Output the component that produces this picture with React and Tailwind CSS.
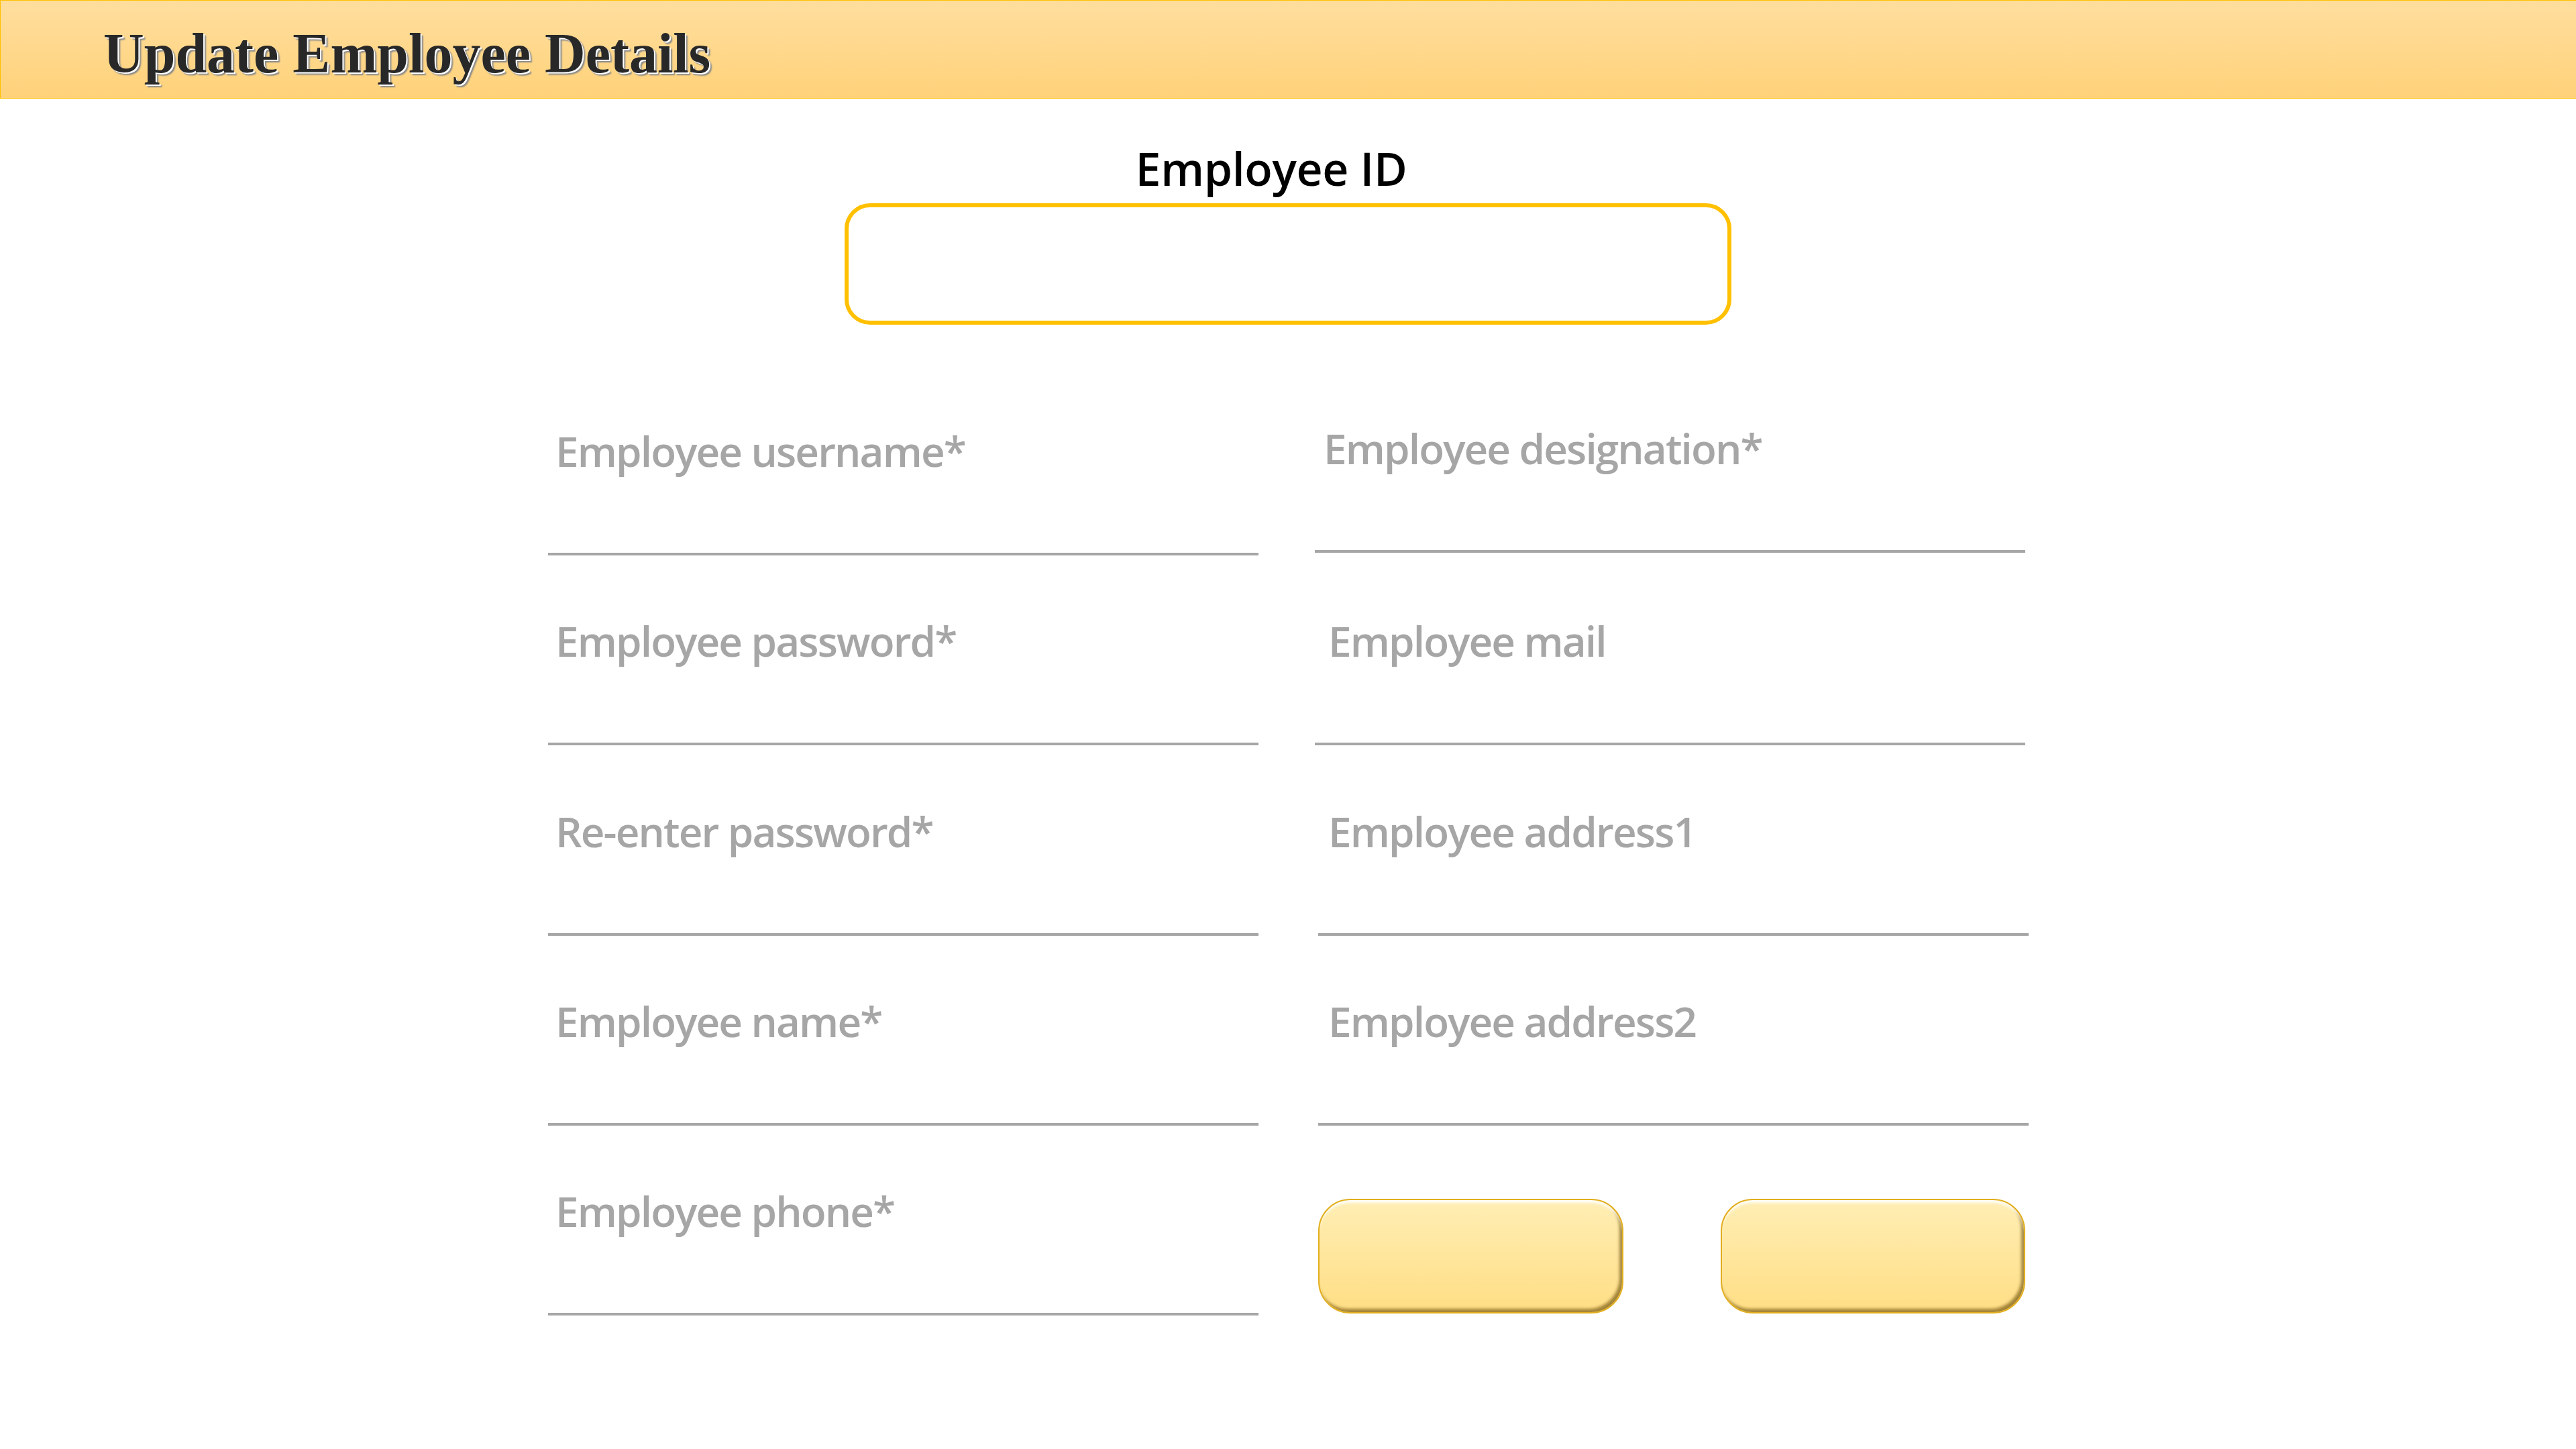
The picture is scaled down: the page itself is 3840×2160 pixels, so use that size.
import React from 'react';

const leftFields = [
    { label: 'Employee username*' },
    { label: 'Employee password*' },
    { label: 'Re-enter password*' },
    { label: 'Employee name*' },
    { label: 'Employee phone*' },
];

// right column is not perfectly aligned in the original, keep the small offsets
const rightFields = [
    { label: 'Employee designation*', wrap: '-mt-[4px]', labelPad: 'pl-[13px]', line: 'mt-[1px]' },
    { label: 'Employee mail', wrap: '', labelPad: 'pl-[20px]', line: '-mt-[1px]' },
    { label: 'Employee address1', wrap: 'ml-[5px]', labelPad: 'pl-[15px]', line: '' },
    { label: 'Employee address2', wrap: 'ml-[5px]', labelPad: 'pl-[15px]', line: '' },
];

function Field({ label, wrap = '', labelPad = 'pl-[11px]', line = '' }) {
    return (
        <div className={`flex flex-col ${wrap}`}>
            <div className={`${labelPad} h-[62px] text-[62px] leading-none font-semibold tracking-[-0.03em] text-[#A6A6A6] whitespace-nowrap`}>
                {label}
            </div>
            <div className={`mt-[121px] h-[4px] w-[1059px] bg-[#A6A6A6] ${line}`}></div>
        </div>
    );
}

function GoldButton({ className = '' }) {
    return (
        <button
            type="button"
            className={`w-[455px] h-[171px] rounded-[48px] border-2 border-[#E2AE1E] bg-gradient-to-b from-[#FFEEB4] to-[#FFDE84] shadow-[inset_0_7px_4px_-3px_rgba(255,255,255,0.95),inset_-4px_-5px_4px_rgba(100,70,0,0.6)] ${className}`}
        ></button>
    );
}

export default function App() {
    return (
        <div className="w-[3840px] h-[2160px] bg-white flex flex-col font-['Open_Sans',sans-serif] overflow-hidden">
            {/* 标题栏 */}
            <header className="h-[147px] shrink-0 border-y border-l border-[#FFC000] bg-gradient-to-b from-[#FFDE9E] to-[#FFD279] pl-[153px] pt-[37px]">
                <h1 className="text-[84px] leading-none font-bold text-[#282828] font-['Liberation_Serif',serif] whitespace-nowrap [text-shadow:2px_2px_0_#ffffff,4px_4px_2px_#8a8a8a]">
                    Update Employee Details
                </h1>
            </header>

            {/* Employee ID */}
            <section className="flex flex-col items-center">
                <div className="mt-[70px] mr-[50px] h-[68px] text-[68px] leading-none font-semibold tracking-[-0.005em] text-black whitespace-nowrap">
                    Employee ID
                </div>
                <div className="mt-[18px] w-[1322px] h-[181px] rounded-[38px] border-[6px] border-[#FFC000] bg-white"></div>
            </section>

            {/* 表单 */}
            <div className="mt-[157px] ml-[817px] grid grid-cols-[1059px_1059px] gap-x-[84px] gap-y-[96.25px]">
                <Field {...leftFields[0]} />
                <Field {...rightFields[0]} />
                <Field {...leftFields[1]} />
                <Field {...rightFields[1]} />
                <Field {...leftFields[2]} />
                <Field {...rightFields[2]} />
                <Field {...leftFields[3]} />
                <Field {...rightFields[3]} />
                <Field {...leftFields[4]} />
                <div className="flex items-start pt-[13px] pl-[5px] gap-[145px]">
                    <GoldButton />
                    <GoldButton />
                </div>
            </div>
        </div>
    );
}
